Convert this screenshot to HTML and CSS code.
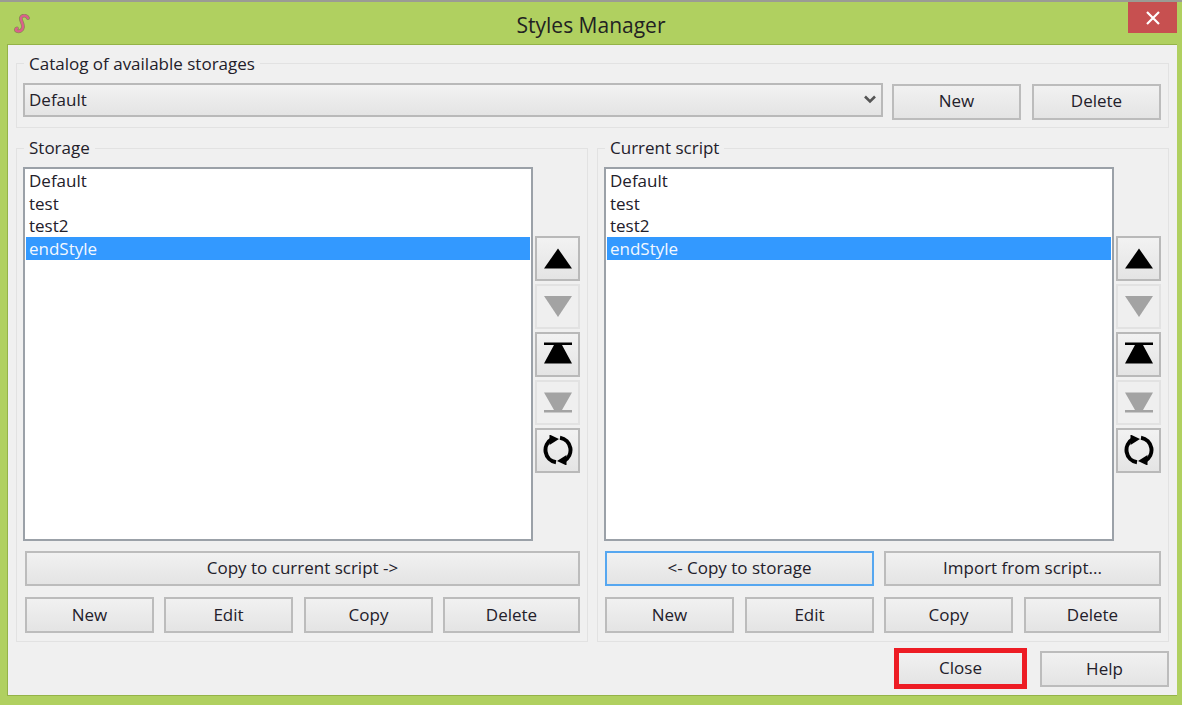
FILE: index.html
```html
<!DOCTYPE html>
<html lang="en">
<head>
<meta charset="utf-8">
<title>Styles Manager</title>
<link rel="stylesheet" href="styles.css">
</head>
<body>
<svg class="defs" width="0" height="0" aria-hidden="true">
  <symbol id="i-up" viewBox="0 0 28 28"><path d="M14 4.5 L28 24.5 H0 Z"/></symbol>
  <symbol id="i-down" viewBox="0 0 28 28"><path d="M0 4 H28 L14 25 Z"/></symbol>
  <symbol id="i-top" viewBox="0 0 28 28"><path d="M0 2.5 H28 V5 H18 L28 23.5 H0 L10 5 H0 Z"/></symbol>
  <symbol id="i-bottom" viewBox="0 0 28 28"><path d="M0 4.5 H28 L18 22 H28 V24.5 H0 V22 H10 Z"/></symbol>
  <symbol id="i-refresh" viewBox="0 0 30 30">
    <path class="ring" d="M13 27.3 A12.5 12.5 0 0 1 9 4 M17 2.7 A12.5 12.5 0 0 1 21 26"/>
    <path d="M6.5 -0.5 L16 4 L6.5 10 Z M23.5 30.5 L14 26 L23.5 20 Z"/>
  </symbol>
</svg>
<div class="window">
  <header class="titlebar">
    <svg class="logo" viewBox="0 0 18 20" width="18" height="20" aria-hidden="true">
      <path d="M15 4 C14 1.5 9.5 0.5 8 3.5 C6.8 6 10.3 9 10 13 C9.7 16.5 6.5 18 3.8 17 C2.4 16.4 2.6 14.6 4 14.4" fill="none" stroke="#8d8a55" stroke-width="3.8" stroke-linecap="round"/>
      <path d="M15 4 C14 1.5 9.5 0.5 8 3.5 C6.8 6 10.3 9 10 13 C9.7 16.5 6.5 18 3.8 17 C2.4 16.4 2.6 14.6 4 14.4" fill="none" stroke="#dc5f8c" stroke-width="2.3" stroke-linecap="round"/>
    </svg>
    <h1 class="title">Styles Manager</h1>
    <div class="winclose">
      <svg viewBox="0 0 14 14" width="14" height="14" aria-hidden="true"><path d="M1 1 L13 13 M13 1 L1 13" stroke="#fff" stroke-width="2.2" fill="none"/></svg>
    </div>
  </header>
  <main class="client">
    <fieldset class="group catalog">
      <legend>Catalog of available storages</legend>
      <div class="catalog-row">
        <div class="combo">
          <span>Default</span>
          <svg viewBox="0 0 12 9" width="12" height="9" aria-hidden="true"><path d="M1 1.5 L6 6.5 L11 1.5" fill="none" stroke="#555" stroke-width="2.6"/></svg>
        </div>
        <button class="btn fixed">New</button>
        <button class="btn fixed">Delete</button>
      </div>
    </fieldset>
    <div class="panes">
      <fieldset class="group pane">
        <legend>Storage</legend>
        <div class="list-area">
          <ul class="list">
            <li>Default</li><li>test</li><li>test2</li><li class="selected">endStyle</li>
          </ul>
          <div class="side">
            <button class="icon-btn"><svg><use href="#i-up"/></svg></button>
            <button class="icon-btn off"><svg><use href="#i-down"/></svg></button>
            <button class="icon-btn"><svg><use href="#i-top"/></svg></button>
            <button class="icon-btn off"><svg><use href="#i-bottom"/></svg></button>
            <button class="icon-btn wide-icon"><svg><use href="#i-refresh"/></svg></button>
          </div>
        </div>
        <div class="actions actions-left">
          <button class="btn slim grow">Copy to current script -&gt;</button>
        </div>
        <div class="actions row row-left">
          <button class="btn fixed">New</button>
          <button class="btn fixed">Edit</button>
          <button class="btn fixed">Copy</button>
          <button class="btn grow">Delete</button>
        </div>
      </fieldset>
      <fieldset class="group pane">
        <legend>Current script</legend>
        <div class="list-area">
          <ul class="list">
            <li>Default</li><li>test</li><li>test2</li><li class="selected">endStyle</li>
          </ul>
          <div class="side">
            <button class="icon-btn"><svg><use href="#i-up"/></svg></button>
            <button class="icon-btn off"><svg><use href="#i-down"/></svg></button>
            <button class="icon-btn"><svg><use href="#i-top"/></svg></button>
            <button class="icon-btn off"><svg><use href="#i-bottom"/></svg></button>
            <button class="icon-btn wide-icon"><svg><use href="#i-refresh"/></svg></button>
          </div>
        </div>
        <div class="actions actions-right">
          <button class="btn slim focus">&lt;- Copy to storage</button>
          <button class="btn slim grow">Import from script...</button>
        </div>
        <div class="actions row row-right">
          <button class="btn fixed">New</button>
          <button class="btn fixed">Edit</button>
          <button class="btn fixed">Copy</button>
          <button class="btn grow">Delete</button>
        </div>
      </fieldset>
    </div>
    <footer class="footer">
      <button class="btn close">Close</button>
      <button class="btn fixed help">Help</button>
    </footer>
  </main>
</div>
</body>
</html>
```

FILE: styles.css
```css
* { box-sizing: border-box; }
html, body { margin: 0; padding: 0; }
body {
  width: 1182px;
  height: 705px;
  overflow: hidden;
  background: #b0d060;
  font-family: "Open Sans", "Noto Sans", sans-serif;
  font-size: 17px;
  color: #23202a;
}
.defs { position: absolute; }
.window {
  height: 705px;
  display: flex;
  flex-direction: column;
  border-top: 2px solid #9b9b94;
}
.titlebar {
  height: 42px;
  display: flex;
  align-items: flex-start;
  padding-left: 13px;
  position: relative;
}
.logo { margin-top: 12px; }
.title {
  position: absolute;
  left: 0;
  right: 0;
  top: 9px;
  margin: 0;
  text-align: center;
  font-size: 21px;
  line-height: 28px;
  font-weight: 400;
  color: #222;
}
.winclose {
  position: absolute;
  left: 1128px;
  top: 0;
  width: 49px;
  height: 31px;
  background: #c75050;
  display: flex;
  align-items: center;
  justify-content: center;
}
.client {
  width: 1170px;
  height: 652px;
  margin-left: 7px;
  background: #f0f0f0;
  border: 1px solid #94b347;
  border-right: 0;
  padding: 8px 8px 0 8px;
  display: flex;
  flex-direction: column;
}
.group {
  margin: 0;
  min-width: 0;
  border: 1px solid #e2e2e2;
  padding: 0 7px 8px 6px;
}
.group legend {
  margin-inline-start: 1px;
  padding: 0 5px;
  height: 20px;
  line-height: 20px;
}
.catalog { height: 75px; padding-top: 10px; }
.catalog legend { line-height: 22px; }
.catalog-row { display: flex; align-items: flex-start; gap: 9px; }
.combo {
  flex: 1;
  height: 34px;
  display: flex;
  align-items: center;
  justify-content: space-between;
  padding: 0 5px 1px 4px;
  border: 2px solid #b9b9b9;
  background: linear-gradient(#f2f2f2, #e4e4e4);
}
.btn {
  height: 36px;
  padding: 0 0 2px;
  font: inherit;
  color: inherit;
  border: 2px solid #bcbcbc;
  background: linear-gradient(#f1f1f1, #e4e4e4);
}
.fixed { width: 129px; flex: none; }
.catalog-row .btn { margin-top: 1px; padding-bottom: 4px; }
.catalog-row .btn:last-child { margin-left: 2px; }
.grow { flex: 1; }
.panes {
  margin-top: 10px;
  display: grid;
  grid-template-columns: 572px 572px;
  gap: 9px;
  height: 504px;
}
.pane { padding-top: 9px; }
.list-area { display: flex; gap: 2px; height: 374px; }
.list {
  width: 510px;
  flex: none;
  margin: 0;
  padding: 1px;
  list-style: none;
  background: #fff;
  border: 2px solid #9ba1a8;
}
.list li {
  height: 22.5px;
  line-height: 22.5px;
  padding-left: 3px;
}
.list li.selected {
  margin-top: -0.5px;
  height: 23px;
  line-height: 23.5px;
  background: #3399ff;
  color: #f2f8ff;
}
.side {
  flex: 1;
  display: flex;
  flex-direction: column;
  justify-content: center;
  gap: 3px;
}
.icon-btn {
  width: 45px;
  height: 45px;
  padding: 0;
  display: flex;
  align-items: center;
  justify-content: center;
  border: 2px solid #b9b9b9;
  background: linear-gradient(#f2f2f2, #e4e4e4);
  fill: #000;
}
.icon-btn svg { width: 28px; height: 28px; display: block; overflow: visible; }
.icon-btn.wide-icon svg { width: 30px; height: 30px; }
.icon-btn.off {
  border-color: #e2e2e2;
  background: #efefef;
  fill: #a3a3a3;
}
.ring { fill: none; stroke: #000; stroke-width: 4; }
.actions { margin-top: 10px; display: flex; gap: 10px; }
.actions-left { margin-left: 2px; }
.actions-right { margin-left: 1px; }
.slim { height: 35px; }
.actions .focus { width: 269px; flex: none; border-color: #56a7f0; }
.row { margin-top: 11px; }
.row-left { margin-left: 2px; }
.row-right { margin-left: 1px; }
.row-left .btn:nth-child(3),
.row-right .btn:nth-child(2),
.row-right .btn:nth-child(4) { margin-left: 1px; }
.footer {
  display: flex;
  justify-content: flex-end;
  align-items: center;
  gap: 13px;
  padding-top: 6px;
}
.help { margin-top: 1px; }
.close {
  width: 133px;
  height: 41px;
  border: 5px solid #ed1c24;
}
```
